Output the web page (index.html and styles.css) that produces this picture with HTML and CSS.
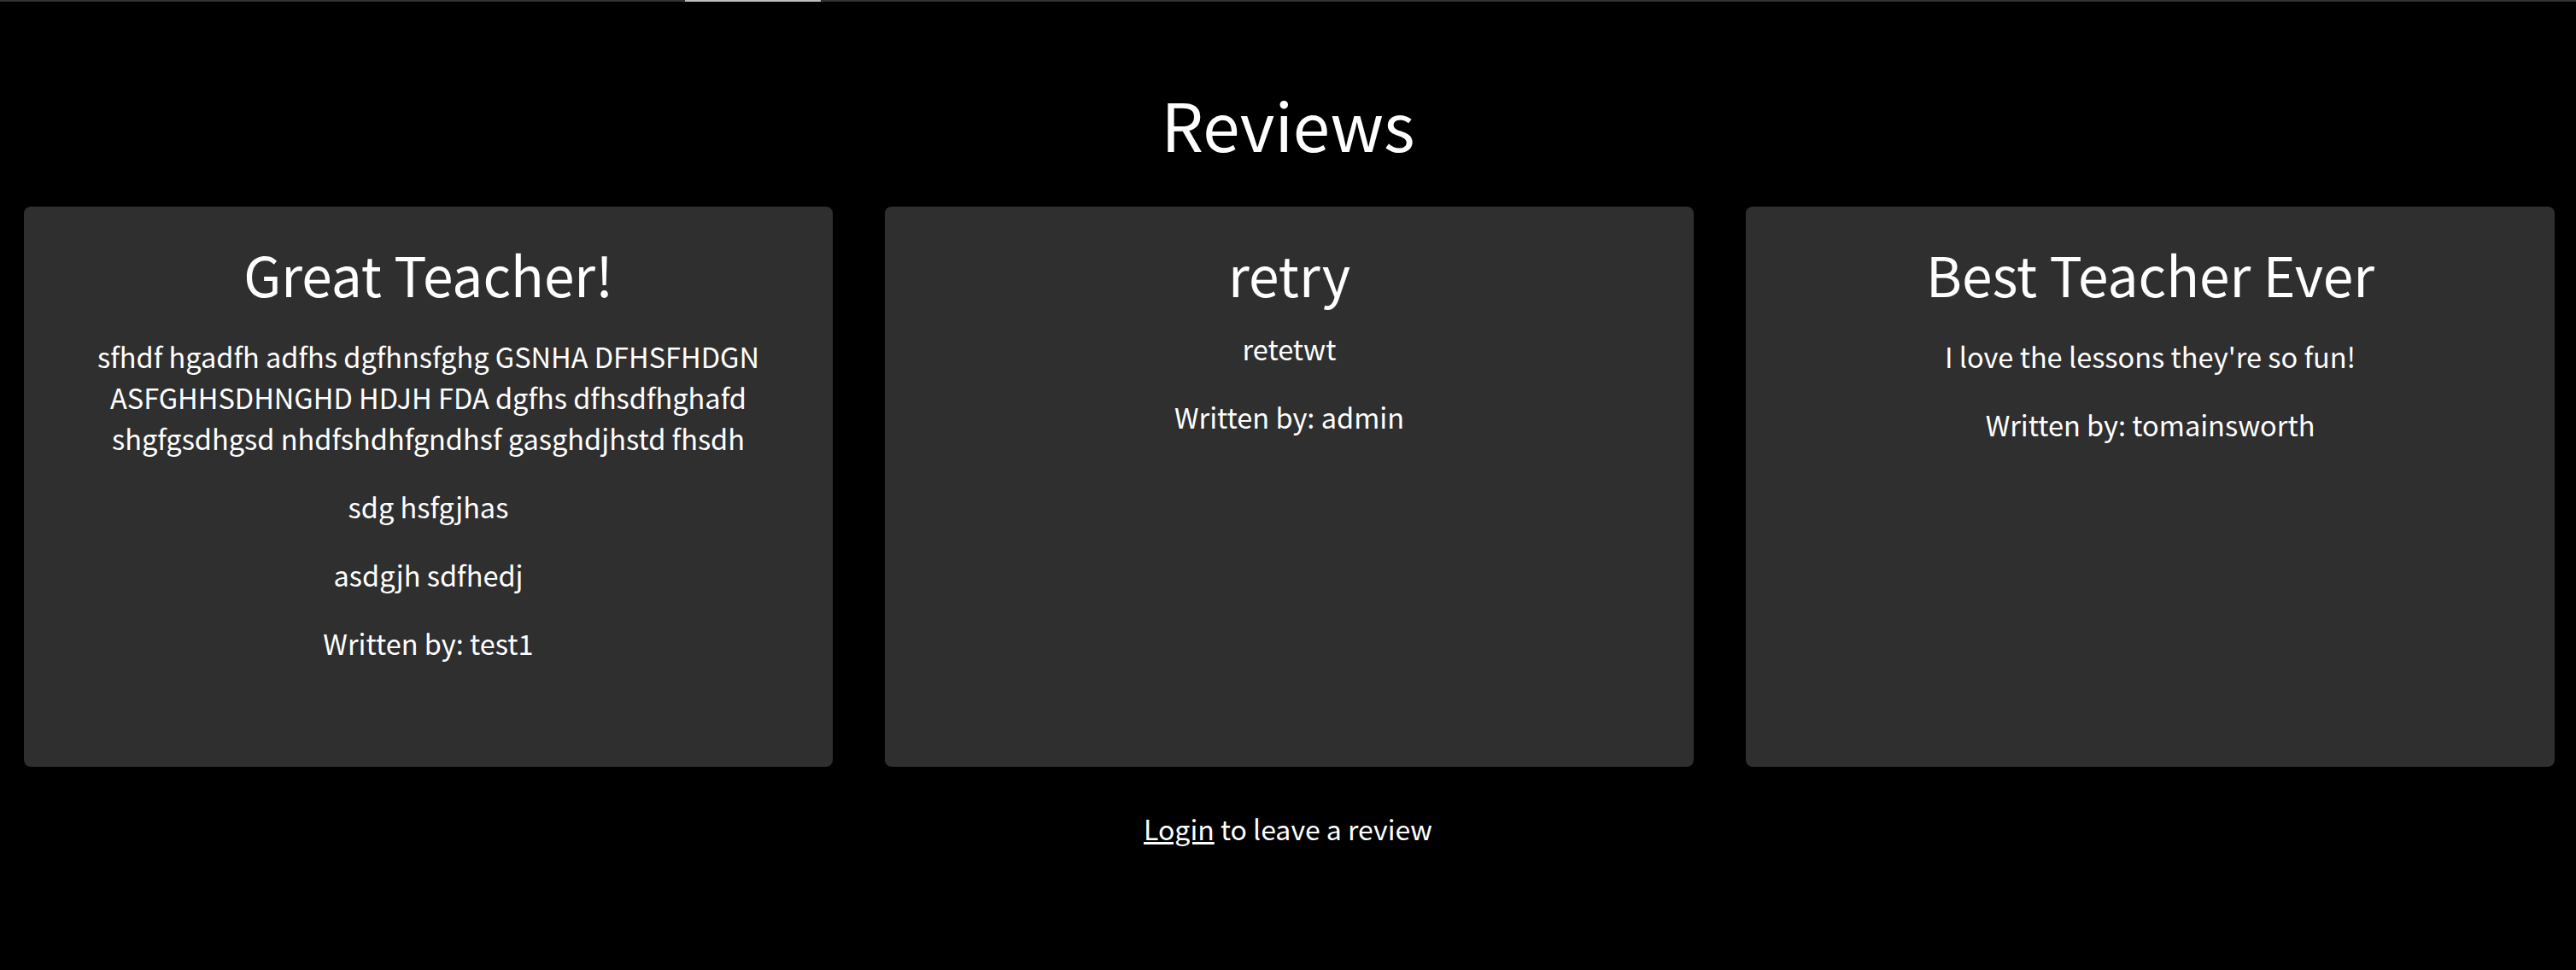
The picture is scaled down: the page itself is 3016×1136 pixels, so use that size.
FILE: index.html
```html
<!DOCTYPE html>
<html lang="en">
<head>
<meta charset="utf-8">
<title>Reviews</title>
<link rel="stylesheet" href="styles.css">
</head>
<body>
<div class="topbar"><div class="topbar-indicator"></div></div>
<main class="reviews">
  <h1 class="reviews-title">Reviews</h1>
  <div class="review-grid">
    <article class="review-card">
      <h2 class="review-heading">Great Teacher!</h2>
      <div class="review-body">
        <p>sfhdf hgadfh adfhs dgfhnsfghg GSNHA DFHSFHDGN ASFGHHSDHNGHD HDJH FDA dgfhs dfhsdfhghafd shgfgsdhgsd nhdfshdhfgndhsf gasghdjhstd fhsdh</p>
        <p>sdg hsfgjhas</p>
        <p>asdgjh sdfhedj</p>
      </div>
      <p class="review-author">Written by: test1</p>
    </article>
    <article class="review-card">
      <h2 class="review-heading">retry</h2>
      <div class="review-body review-body--plain">retetwt</div>
      <p class="review-author">Written by: admin</p>
    </article>
    <article class="review-card">
      <h2 class="review-heading">Best Teacher Ever</h2>
      <div class="review-body">
        <p>I love the lessons they're so fun!</p>
      </div>
      <p class="review-author">Written by: tomainsworth</p>
    </article>
  </div>
  <p class="review-cta"><a class="review-link" href="#">Login</a> to leave a review</p>
</main>
</body>
</html>
```

FILE: styles.css
```css
html, body {
  margin: 0;
  padding: 0;
  background: #000;
  color: #fff;
  font-family: "Noto Sans CJK KR", "Noto Sans", sans-serif;
}

.topbar {
  height: 2px;
  background: #333;
  display: flex;
}

.topbar-indicator {
  margin-left: 802px;
  width: 159px;
  background: #bdbdbd;
}

.reviews {
  display: flex;
  flex-direction: column;
  align-items: stretch;
}

.reviews-title {
  margin: 0;
  padding-top: 92px;
  font-size: 78px;
  font-weight: 400;
  line-height: 100px;
  text-align: center;
}

.review-grid {
  display: grid;
  grid-template-columns: repeat(3, 947px);
  justify-content: start;
  column-gap: 61px;
  margin-top: 48px;
  padding-left: 28px;
}

.review-card {
  background: #2f2f2f;
  border-radius: 8px;
  min-height: 656px;
  box-sizing: border-box;
  padding: 38px 40px;
  text-align: center;
}

.review-heading {
  margin: 0 0 24px;
  font-size: 64px;
  font-weight: 400;
  line-height: 80px;
}

.review-body p,
.review-author {
  margin: 32px 0;
  font-size: 32.5px;
  line-height: 48px;
}

.review-body p:first-child {
  margin-top: 33px;
}

.review-body--plain {
  font-size: 32.5px;
  line-height: 48px;
}

.review-cta {
  margin: 48px 0 0;
  font-size: 32px;
  line-height: 48px;
  text-align: center;
}

.review-link {
  color: #fff;
  text-decoration: underline;
}
```
